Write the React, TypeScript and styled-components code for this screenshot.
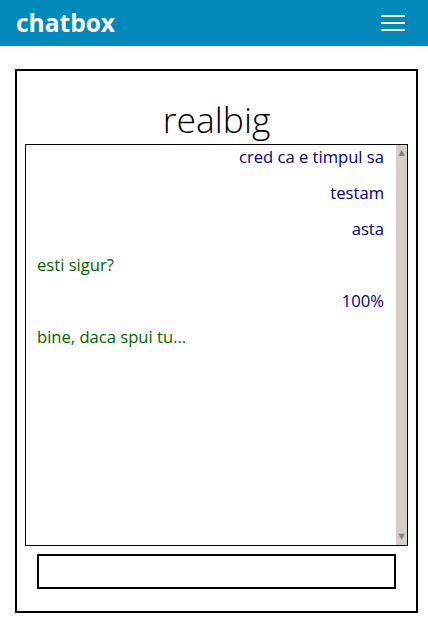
import React from "react";
import styled, { createGlobalStyle } from "styled-components";

const Global = createGlobalStyle`
  html, body { margin: 0; padding: 0; background: #ffffff; }
  body { font-family: "Open Sans", "Liberation Sans", sans-serif; }
  * { box-sizing: border-box; }
`;

const Header = styled.header`
  height: 46px;
  background: #0089ba;
  display: flex;
  align-items: center;
  justify-content: space-between;
  padding: 0 23px 0 16px;
`;

const Brand = styled.div`
  color: #ffffff;
  font-weight: 700;
  font-size: 24.5px;
  line-height: 46px;
`;

const MenuButton = styled.div`
  width: 24px;
  display: flex;
  flex-direction: column;
  gap: 5px;
`;

const MenuLine = styled.span`
  display: block;
  height: 2px;
  background: #ffffff;
`;

const Panel = styled.main`
  margin: 23px 0 0 15px;
  width: 403px;
  height: 544px;
  border: 2px solid #000000;
  padding: 0 8px 20px 8px;
  display: flex;
  flex-direction: column;
`;

const Title = styled.h1`
  margin: 0;
  height: 73px;
  font-weight: 300;
  font-size: 35.5px;
  line-height: 73px;
  padding-top: 12px;
  text-align: center;
  color: #000000;
`;

const ChatArea = styled.section`
  height: 402px;
  border: 1px solid #000000;
  display: flex;
`;

const Messages = styled.div`
  flex: 1;
  padding: 0 12px 0 11px;
  display: flex;
  flex-direction: column;
  gap: 12px;
`;

const Message = styled.div<{ $mine: boolean }>`
  font-size: 16.6px;
  line-height: 24px;
  text-align: ${(p) => (p.$mine ? "right" : "left")};
  color: ${(p) => (p.$mine ? "#000080" : "#006400")};
`;

const Scrollbar = styled.div`
  width: 11px;
  background: #d4d0c8;
  display: flex;
  flex-direction: column;
  justify-content: space-between;
  align-items: center;
  padding: 3px 0 4px;
  color: #808080;
  font-size: 8px;
  line-height: 9px;
  font-family: "DejaVu Sans", sans-serif;
`;

const Input = styled.input`
  margin: 8px 12px 0 12px;
  height: 35px;
  border: 2px solid #000000;
  background: #ffffff;
  outline: none;
  font-family: inherit;
  font-size: 16px;
  padding: 0 6px;
`;

const messages = [
  { text: "cred ca e timpul sa", mine: true },
  { text: "testam", mine: true },
  { text: "asta", mine: true },
  { text: "esti sigur?", mine: false },
  { text: "100%", mine: true },
  { text: "bine, daca spui tu...", mine: false },
];

export default function App() {
  return (
    <>
      <Global />
      <Header>
        <Brand>chatbox</Brand>
        <MenuButton>
          <MenuLine />
          <MenuLine />
          <MenuLine />
        </MenuButton>
      </Header>
      <Panel>
        <Title>realbig</Title>
        <ChatArea>
          <Messages>
            {messages.map((m, i) => (
              <Message key={i} $mine={m.mine}>
                {m.text}
              </Message>
            ))}
          </Messages>
          <Scrollbar>
            <span>▲</span>
            <span>▼</span>
          </Scrollbar>
        </ChatArea>
        <Input type="text" />
      </Panel>
    </>
  );
}
